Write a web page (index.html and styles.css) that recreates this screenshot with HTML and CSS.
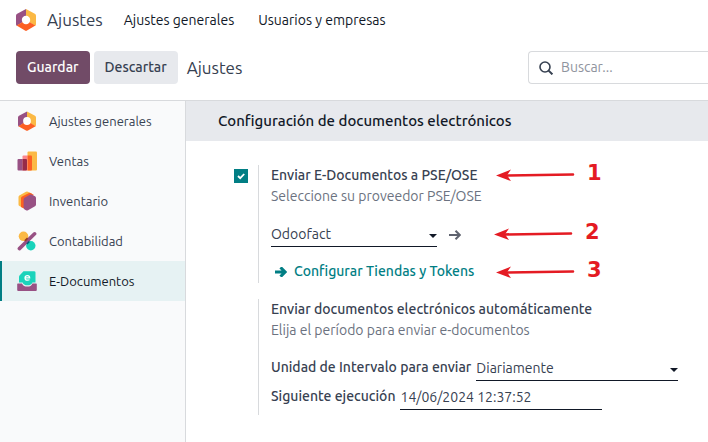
FILE: index.html
```html
<!DOCTYPE html>
<html lang="es">
<head>
<meta charset="utf-8">
<meta name="viewport" content="width=device-width, initial-scale=1">
<title>Ajustes</title>
<link rel="stylesheet" href="styles.css">
</head>
<body>
<header class="navbar">
  <a class="brand" href="#">
    <svg class="brand-icon" viewBox="0 0 20 22" aria-hidden="true">
      <path fill="#985184" d="M10 0 1.2 4.8Q0 5.4 0 6.8V15.200Q0 16.200.8 16.800L10 11Z"/>
      <path fill="#fbb945" d="M10 0 18.800 4.800Q20 5.400 20 6.800V15.200Q20 16.200 19.200 16.800L10 11Z"/>
      <path fill="#fc5f24" d="M.6 16.600 6.200 13.200H13.800L19.400 16.600 11 21.600Q10 22.200 9 21.600Z"/>
      <circle cx="10" cy="11" r="4.200" fill="#fff"/>
    </svg>
    <span>Ajustes</span>
  </a>
  <nav class="menu">
    <a href="#">Ajustes generales</a>
    <a href="#">Usuarios y empresas</a>
  </nav>
</header>

<div class="control-panel">
  <div class="actions">
    <button class="btn btn-primary" type="button">Guardar</button>
    <button class="btn btn-secondary" type="button">Descartar</button>
  </div>
  <h1 class="page-title">Ajustes</h1>
  <label class="search">
    <svg class="search-icon" viewBox="0 0 14 14" aria-hidden="true"><circle cx="6" cy="6" r="5" fill="none" stroke="#374151" stroke-width="1.600"/><path d="M9.600 9.600 13.400 13.400" stroke="#374151" stroke-width="2"/></svg>
    <input type="search" placeholder="Buscar..." aria-label="Buscar">
  </label>
</div>

<div class="body">
  <nav class="sidebar">
    <a class="tab" href="#">
      <svg class="tab-icon" viewBox="0 0 20 20" aria-hidden="true">
        <path fill="#985184" d="M10 .5 2 4.800Q1 5.300 1 6.500V14Q1 15 1.600 15.400L10 10Z"/>
        <path fill="#fbb945" d="M10 .5 18 4.800Q19 5.300 19 6.500V14Q19 15 18.400 15.400L10 10Z"/>
        <path fill="#fc5f24" d="M1.400 15.200 6.500 12H13.500L18.600 15.200 11 19.500Q10 20 9 19.500Z"/>
        <circle cx="10" cy="10" r="3.900" fill="#fff"/>
      </svg>
      <span>Ajustes generales</span>
    </a>
    <a class="tab" href="#">
      <svg class="tab-icon" viewBox="0 0 20 20" aria-hidden="true">
        <path fill="#fbb945" d="M10.500 1.500Q10.500.5 11.500.5H19Q20 .5 20 1.500V18.500Q20 19.500 19 19.500H10.500Z"/>
        <path fill="#fc868b" d="M5.500 5.500Q5.500 4.500 6.500 4.500H10.500V19.500H5.500Z"/>
        <path fill="#fc5f24" d="M10.500 4.500H14Q15 4.500 15 5.500V18.500Q15 19.500 14 19.500H10.500Z"/>
        <path fill="#985184" d="M.5 9Q.5 8 1.500 8H5.500V19.500H1.500Q.5 19.500.5 18.500Z"/>
        <path fill="#962b48" d="M5.500 8H9Q10 8 10 9V18.500Q10 19.500 9 19.500H5.500Z"/>
      </svg>
      <span>Ventas</span>
    </a>
    <a class="tab" href="#">
      <svg class="tab-icon" viewBox="0 0 20 20" aria-hidden="true">
        <path fill="#fbb945" d="M9 .8 2.300 4.500Q1.500 5 1.500 6V13.500Q1.500 14.500 2.500 15L6 17V7L15 2.800 11 .8Q10 .3 9 .8Z"/>
        <path fill="#fc5f24" d="M12 2 5 5.500Q4 6 4 7V15.900L8 18 9 7 17 4 14 2.200Q13 1.600 12 2Z"/>
        <path fill="#985184" d="M14.500 3.600 18 5.200Q19 5.800 19 7V13.600Q19 14.600 18 15.200L11 19.200Q10 19.800 9 19.200L7.600 18.400Q6.600 17.800 6.600 16.800V8.400Q6.600 7.400 7.600 6.800L12.800 3.700Q13.600 3.200 14.500 3.600Z"/>
      </svg>
      <span>Inventario</span>
    </a>
    <a class="tab" href="#">
      <svg class="tab-icon" viewBox="0 0 20 20" aria-hidden="true">
        <circle cx="6.500" cy="5.300" r="4.800" fill="#fbb945"/>
        <circle cx="13.800" cy="14.800" r="4.700" fill="#1ad3bb"/>
        <path d="M2.400 17.600 17.600 2.800" stroke="#985184" stroke-width="3.600" stroke-linecap="round"/>
        <path d="M7.900 9.900 10.600 7.200" stroke="#953b24" stroke-width="1.800"/>
        <path d="M9.900 13 12.400 10.500" stroke="#005e7a" stroke-width="1.600"/>
      </svg>
      <span>Contabilidad</span>
    </a>
    <a class="tab tab-active" href="#" aria-current="page">
      <svg class="tab-icon" viewBox="0 0 20 20" aria-hidden="true">
        <path fill="#1ad3bb" d="M6.500.2H17Q18.500.2 18.500 1.500V11.400H15.400Q14.500 14.200 10.500 14.200T5.600 11.400H2V6Q2 5 2.500 4.500Z"/>
        <path d="M7.900 6.900H12.700Q12.700 4.600 10.400 4.600T8 6.900Q8 9.200 10.500 9.200 11.800 9.200 12.500 8.600" fill="none" stroke="#fff" stroke-width="1.200"/>
        <path fill="#985184" d="M.2 13Q.2 12.400.8 12.400H5Q6.500 15.600 10.300 15.600T15.400 12.400H19.200Q19.800 12.400 19.800 13V19Q19.800 20 18.800 20H1.200Q.2 20 .2 19Z"/>
      </svg>
      <span>E-Documentos</span>
    </a>
  </nav>

  <main class="content">
    <h2 class="section-title">Configuración de documentos electrónicos</h2>
    <form class="settings">
      <section class="setting">
        <input class="check" type="checkbox" id="send" checked>
        <div class="setting-body">
          <label class="label" for="send">Enviar E-Documentos a PSE/OSE</label>
          <p class="help">Seleccione su proveedor PSE/OSE</p>
          <div class="field first-field">
            <select class="control provider" aria-label="Proveedor PSE/OSE"><option>Odoofact</option></select>
            <a class="open" href="#" aria-label="Abrir proveedor">
              <svg class="arrow" viewBox="0 0 12 10" aria-hidden="true"><path d="M0 5H11M6.500.7 10.800 5 6.500 9.300" fill="none" stroke="#5f636f" stroke-width="2"/></svg>
            </a>
          </div>
          <a class="link" href="#">
            <svg class="arrow" viewBox="0 0 12 10" aria-hidden="true"><path d="M0 5H10M5.500.4 10.200 5 5.500 9.600" fill="none" stroke="#017e84" stroke-width="3"/></svg>
            <span>Configurar Tiendas y Tokens</span>
          </a>
        </div>
      </section>
      <section class="setting">
        <div class="setting-body">
          <h3 class="label">Enviar documentos electrónicos automáticamente</h3>
          <p class="help">Elija el período para enviar e-documentos</p>
          <div class="field first-field">
            <label class="label" for="unit">Unidad de Intervalo para enviar</label>
            <select class="control" id="unit"><option>Diariamente</option></select>
          </div>
          <div class="field last-field">
            <label class="label" for="next">Siguiente ejecución</label>
            <input class="control" id="next" type="text" value="14/06/2024 12:37:52">
          </div>
        </div>
      </section>
    </form>

    <div class="note note-1"><svg viewBox="0 0 80 14" aria-hidden="true"><path d="M10 7.500 77 6.500" stroke="#e41b23" stroke-width="2.600" stroke-linecap="round"/><path fill="#e41b23" d="M0 7.500 15 1.500 11 7.300 15 13Z"/></svg><b>1</b></div>
    <div class="note note-2"><svg viewBox="0 0 80 14" aria-hidden="true"><path d="M10 7.500 77 6.500" stroke="#e41b23" stroke-width="2.600" stroke-linecap="round"/><path fill="#e41b23" d="M0 7.500 15 1.500 11 7.300 15 13Z"/></svg><b>2</b></div>
    <div class="note note-3"><svg viewBox="0 0 80 14" aria-hidden="true"><path d="M10 7.500 77 6.500" stroke="#e41b23" stroke-width="2.600" stroke-linecap="round"/><path fill="#e41b23" d="M0 7.500 15 1.500 11 7.300 15 13Z"/></svg><b>3</b></div>
  </main>
</div>
</body>
</html>
```

FILE: styles.css
```css
* {
  box-sizing: border-box;
}

body {
  margin: 0;
  min-height: 100vh;
  display: flex;
  flex-direction: column;
  overflow-x: hidden;
  background: #fff;
  color: #374151;
  font: 14px/21px Ubuntu, "Noto Sans", sans-serif;
}

a {
  color: inherit;
  text-decoration: none;
}

h1, h2, h3, p {
  margin: 0;
}

input, select, button {
  font: inherit;
  color: inherit;
}

.navbar {
  display: flex;
  align-items: center;
  gap: 21px;
  height: 40px;
  padding: 0 16px;
}

.brand {
  display: flex;
  align-items: center;
  gap: 11px;
  font-size: 17px;
  line-height: 20px;
}

.brand-icon {
  width: 20px;
  height: 22px;
}

.menu {
  display: flex;
  gap: 24px;
  color: #111827;
}

.control-panel {
  display: flex;
  align-items: center;
  gap: 9px;
  padding: 11px 0 16px 16px;
  border-bottom: 1px solid #d8dadd;
}

.actions {
  display: flex;
  gap: 4px;
}

.btn {
  height: 33px;
  padding: 0 11px;
  border: 0;
  border-radius: 4px;
  font-weight: 500;
}

.btn-primary {
  background: #714b67;
  color: #fff;
}

.btn-secondary {
  background: #e7e9ed;
}

.page-title {
  flex: 1;
  font-size: 17px;
  font-weight: 400;
}

.search {
  display: flex;
  align-items: center;
  gap: 8px;
  width: 180px;
  height: 33px;
  padding-left: 10px;
  border: 1px solid #d8dadd;
  border-right: 0;
  border-radius: 4px 0 0 4px;
}

.search-icon {
  flex: none;
  width: 14px;
  height: 14px;
}

.search input {
  flex: 1;
  min-width: 0;
  padding: 0;
  border: 0;
  outline: 0;
  background: none;
}

.search input::placeholder {
  color: #8f949e;
}

.body {
  flex: 1;
  display: flex;
}

.sidebar {
  flex: none;
  width: 186px;
  border-right: 1px solid #d8dadd;
  background: #f9fafb;
  font-size: 13px;
}

.tab {
  display: flex;
  align-items: center;
  gap: 12px;
  height: 40px;
  padding-left: 17px;
}

.tab-active {
  padding-left: 15px;
  border-left: 2px solid #017e84;
  background: #e6f2f3;
  color: #111827;
}

.tab-icon {
  width: 20px;
  height: 20px;
}

.content {
  position: relative;
  flex: 1;
}

.section-title {
  padding: 0 32px;
  background: #e7e9ed;
  color: #111827;
  font-size: 15px;
  font-weight: 500;
  line-height: 40px;
}

.settings {
  display: flex;
  flex-direction: column;
  gap: 16px;
  padding: 24px 28px 24px 48px;
}

.setting {
  display: grid;
  grid-template-columns: 24px 1fr;
}

.check {
  appearance: none;
  width: 14px;
  height: 14px;
  margin: 4px 0 0;
  background: #017e84 url("data:image/svg+xml,%3Csvg xmlns='http://www.w3.org/2000/svg' viewBox='0 0 14 14'%3E%3Cpath d='M4 7l2.200 2.200L10.200 5' fill='none' stroke='white' stroke-width='1.800'/%3E%3C/svg%3E");
}

.setting-body {
  grid-column: 2;
  padding: 0 0 1px 12px;
  border-left: 1px solid #d8dadd;
}

.label {
  font-size: 14px;
  font-weight: 500;
}

.help {
  color: #6b7280;
}

.field {
  display: flex;
  align-items: flex-start;
  gap: 5px;
  height: 24px;
  margin-top: 5px;
}

.first-field {
  margin-top: 16px;
}

.last-field {
  margin-bottom: 4px;
}

.control {
  appearance: none;
  width: 202px;
  height: 24px;
  padding: 0 0 1px;
  border: 0;
  border-bottom: 1px solid #111827;
  border-radius: 0;
  outline: 0;
  background: none;
}

select.control {
  background: url("data:image/svg+xml,%3Csvg xmlns='http://www.w3.org/2000/svg' viewBox='0 0 8 4'%3E%3Cpath d='M0 0h8L4 4z' fill='%23111827'/%3E%3C/svg%3E") right 0 top 11px / 8px 4px no-repeat;
}

.provider {
  width: 166px;
}

.open {
  display: flex;
  align-self: center;
  padding-left: 7px;
}

.arrow {
  width: 12px;
  height: 10px;
}

.link {
  display: flex;
  align-items: center;
  gap: 7px;
  margin-top: 14px;
  padding-left: 4px;
  color: #017e84;
  font-weight: 500;
}

.note {
  position: absolute;
  display: flex;
  align-items: center;
  gap: 11px;
  color: #e41b23;
  font: 21px/20px "DejaVu Sans", sans-serif;
}

.note b {
  padding-bottom: 3px;
}

.note svg {
  width: 80px;
  height: 14px;
}

.note-1 {
  left: 310px;
  top: 62px;
}

.note-2 {
  left: 308px;
  top: 121px;
}

.note-3 {
  left: 310px;
  top: 159px;
}
```
